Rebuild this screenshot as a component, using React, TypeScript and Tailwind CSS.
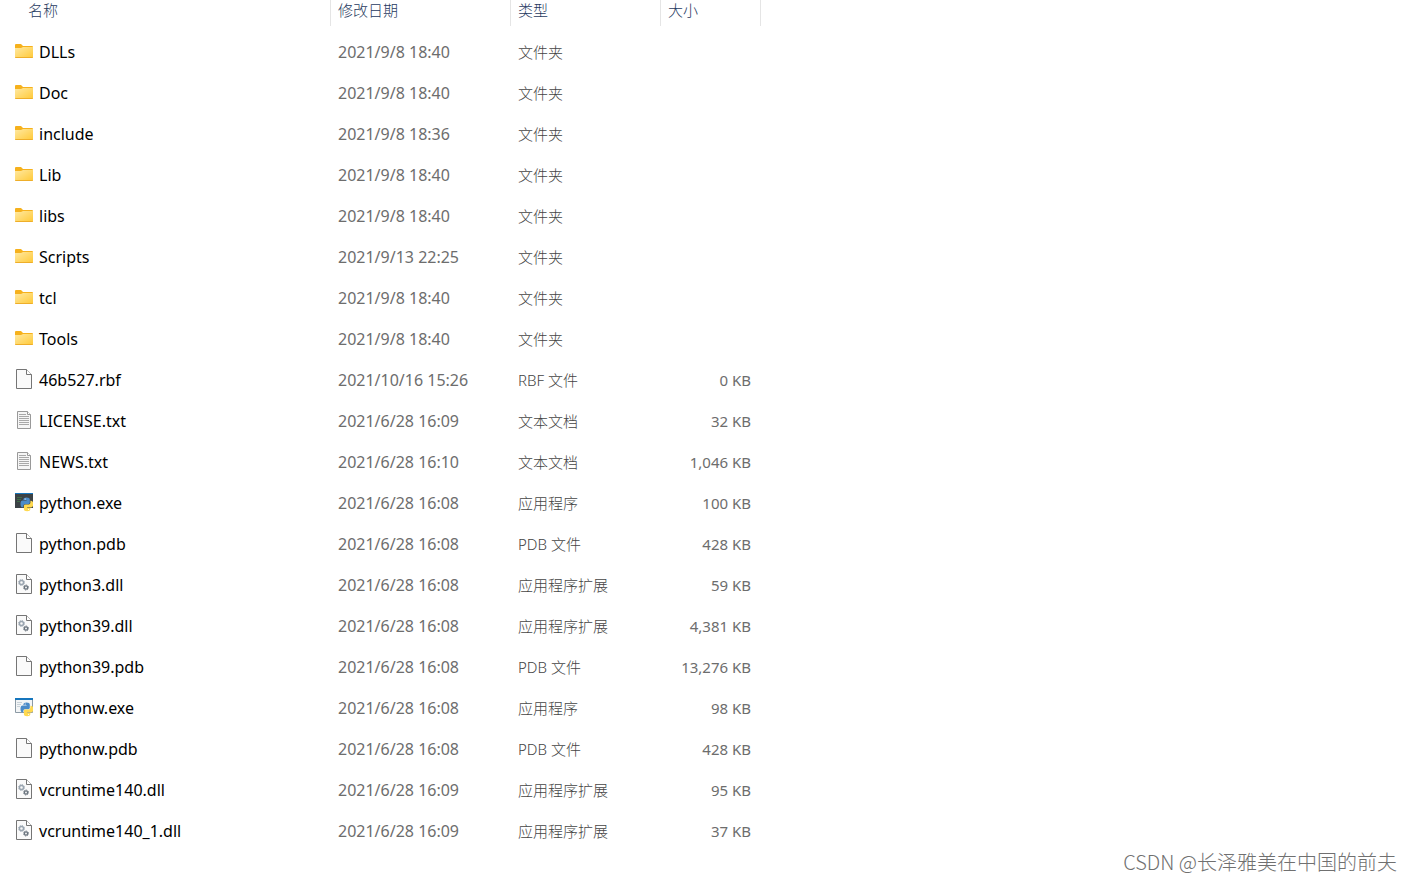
type Kind = "folder" | "file" | "text" | "dll" | "console" | "window";

type Entry = {
  name: string;
  date: string;
  type: string;
  size?: string;
  kind: Kind;
};

const entries: Entry[] = [
  { name: "DLLs", date: "2021/9/8 18:40", type: "文件夹", kind: "folder" },
  { name: "Doc", date: "2021/9/8 18:40", type: "文件夹", kind: "folder" },
  { name: "include", date: "2021/9/8 18:36", type: "文件夹", kind: "folder" },
  { name: "Lib", date: "2021/9/8 18:40", type: "文件夹", kind: "folder" },
  { name: "libs", date: "2021/9/8 18:40", type: "文件夹", kind: "folder" },
  { name: "Scripts", date: "2021/9/13 22:25", type: "文件夹", kind: "folder" },
  { name: "tcl", date: "2021/9/8 18:40", type: "文件夹", kind: "folder" },
  { name: "Tools", date: "2021/9/8 18:40", type: "文件夹", kind: "folder" },
  { name: "46b527.rbf", date: "2021/10/16 15:26", type: "RBF 文件", size: "0 KB", kind: "file" },
  { name: "LICENSE.txt", date: "2021/6/28 16:09", type: "文本文档", size: "32 KB", kind: "text" },
  { name: "NEWS.txt", date: "2021/6/28 16:10", type: "文本文档", size: "1,046 KB", kind: "text" },
  { name: "python.exe", date: "2021/6/28 16:08", type: "应用程序", size: "100 KB", kind: "console" },
  { name: "python.pdb", date: "2021/6/28 16:08", type: "PDB 文件", size: "428 KB", kind: "file" },
  { name: "python3.dll", date: "2021/6/28 16:08", type: "应用程序扩展", size: "59 KB", kind: "dll" },
  { name: "python39.dll", date: "2021/6/28 16:08", type: "应用程序扩展", size: "4,381 KB", kind: "dll" },
  { name: "python39.pdb", date: "2021/6/28 16:08", type: "PDB 文件", size: "13,276 KB", kind: "file" },
  { name: "pythonw.exe", date: "2021/6/28 16:08", type: "应用程序", size: "98 KB", kind: "window" },
  { name: "pythonw.pdb", date: "2021/6/28 16:08", type: "PDB 文件", size: "428 KB", kind: "file" },
  { name: "vcruntime140.dll", date: "2021/6/28 16:09", type: "应用程序扩展", size: "95 KB", kind: "dll" },
  { name: "vcruntime140_1.dll", date: "2021/6/28 16:09", type: "应用程序扩展", size: "37 KB", kind: "dll" },
];

function FolderIcon() {
  return (
    <svg viewBox="0 0 18 20" className="h-5 w-[18px]" aria-hidden="true">
      <defs>
        <linearGradient id="folder" x1="0" y1="0" x2="1" y2="1">
          <stop offset="0" stopColor="#ffe9a2" />
          <stop offset="1" stopColor="#ffc937" />
        </linearGradient>
      </defs>
      <path d="M0 4q0-1 1-1h5l2 2h9q1 0 1 1v3H0z" fill="#f6b11c" />
      <path d="M0 7h6l2-1h10v10q0 1-1 1H1q-1 0-1-1z" fill="url(#folder)" />
      <path d="M0 16h18q0 1-1 1H1q-1 0-1-1z" fill="#eeae2a" />
    </svg>
  );
}

function Page() {
  return (
    <>
      <path d="M1.5.5h10l5 5v14h-15z" fill="#fafafa" stroke="#757575" />
      <path d="M11.5.5v5h5" fill="#fff" stroke="#757575" />
    </>
  );
}

function FileIcon() {
  return (
    <svg viewBox="0 0 18 20" className="h-5 w-[18px]" aria-hidden="true">
      <Page />
    </svg>
  );
}

function TextIcon() {
  return (
    <svg viewBox="0 0 18 20" className="h-5 w-[18px]" aria-hidden="true">
      <path d="M2.5 1.5h10l3 3v14h-13z" fill="#f5f5f5" stroke="#999" />
      <path d="M12.5 1.5v3h3" fill="#fff" stroke="#999" />
      <path
        d="M4 4.5h7M4 6.5h10M4 8.5h10M4 10.5h10M4 12.5h10M4 14.5h10"
        stroke="#a8a8a8"
      />
    </svg>
  );
}

function DllIcon() {
  return (
    <svg viewBox="0 0 18 20" className="h-5 w-[18px]" aria-hidden="true">
      <Page />
      <circle cx="6.5" cy="8.5" r="2" fill="none" stroke="#9aa5b0" strokeWidth="1.4" />
      <circle cx="6.5" cy="8.5" r="3" fill="none" stroke="#9aa5b0" strokeDasharray="1.2 1.15" />
      <circle cx="11" cy="13.5" r="1.6" fill="none" stroke="#68727c" strokeWidth="1.3" />
      <circle cx="11" cy="13.5" r="2.5" fill="none" stroke="#68727c" strokeDasharray="1 .96" />
    </svg>
  );
}

function Snakes() {
  return (
    <>
      <path
        d="M8.4 7.4q0-2 3.2-2t3.2 2v3.4q0 1.4-1.5 1.4H10q-1.7 0-1.7 1.7v1.4h-.7q-2.1 0-2.1-3.4t2.1-3.4h4v-.4H8.4z"
        fill="#4b8bc8"
      />
      <path
        d="M15.4 8.7h.7q2.1 0 2.1 3.4t-2.1 3.4h-4v.4h3.2v1.4q0 1.9-3.2 1.9t-3.2-1.9v-3.5q0-1.4 1.5-1.4h3.3q1.7 0 1.7-1.7z"
        fill="#ffd94f"
      />
      <circle cx="10.2" cy="7" r=".6" fill="#fff" />
      <circle cx="13.6" cy="17.3" r=".6" fill="#fff" />
    </>
  );
}

function ConsoleIcon() {
  return (
    <svg viewBox="0 0 18 20" className="h-5 w-[18px]" aria-hidden="true">
      <path d="M0 2h18v14H0z" fill="#3c4246" />
      <path d="M0 1h18v1H0z" fill="#1676bd" />
      <path d="M2 5.5h5M2 7.5h4M2 9.5h3" stroke="#3f6c48" />
      <Snakes />
    </svg>
  );
}

function WindowIcon() {
  return (
    <svg viewBox="0 0 18 20" className="h-5 w-[18px]" aria-hidden="true">
      <path d="M.5 2.5h17v13H.5z" fill="#f3f5f6" stroke="#8c9aa5" />
      <path d="M0 1h18v2H0z" fill="#1676bd" />
      <path d="M2 5.5h5M2 7.5h4M2 9.5h3" stroke="#c8d1d8" />
      <Snakes />
    </svg>
  );
}

const icons = {
  folder: FolderIcon,
  file: FileIcon,
  text: TextIcon,
  dll: DllIcon,
  console: ConsoleIcon,
  window: WindowIcon,
};

const columns = ["名称", "修改日期", "类型", "大小"];

export default function App() {
  return (
    <div className="relative min-h-screen bg-white font-['Noto_Sans','Noto_Sans_CJK_SC',sans-serif] text-[15px]">
      <main>
        <table className="w-[761px] table-fixed border-collapse text-left">
          <colgroup>
            <col className="w-[331px]" />
            <col className="w-[180px]" />
            <col className="w-[150px]" />
            <col className="w-[100px]" />
          </colgroup>
          <thead>
            <tr className="h-8">
              {columns.map((label, i) => (
                <th key={label} scope="col" className="p-0 align-top font-light text-[#1f3a60]">
                  <div
                    className={`h-[26px] border-r border-[#e5e5e5] leading-5 ${
                      i === 0 ? "pl-7" : "pl-[7px]"
                    }`}
                  >
                    {label}
                  </div>
                </th>
              ))}
            </tr>
          </thead>
          <tbody className="text-[#6d6d6d]">
            {entries.map((entry) => {
              const Icon = icons[entry.kind];
              return (
                <tr key={entry.name} className="h-[41px] whitespace-nowrap">
                  <td className="p-0 pb-[2px] pl-[15px] text-base text-black">
                    <div className="flex items-center gap-[6px]">
                      <span className="pb-px">
                        <Icon />
                      </span>
                      {entry.name}
                    </div>
                  </td>
                  <td className="p-0 pb-[2px] pl-[7px] text-base">{entry.date}</td>
                  <td className="p-0 pl-[7px] font-light text-[#444]">{entry.type}</td>
                  <td className="p-0 pr-[10px] text-right">{entry.size}</td>
                </tr>
              );
            })}
          </tbody>
        </table>
      </main>

      {/* Watermark */}
      <p className="absolute right-4 bottom-1 font-['Noto_Sans_CJK_SC',sans-serif] text-xl leading-7 font-light text-[#707070]">
        CSDN @长泽雅美在中国的前夫
      </p>
    </div>
  );
}
